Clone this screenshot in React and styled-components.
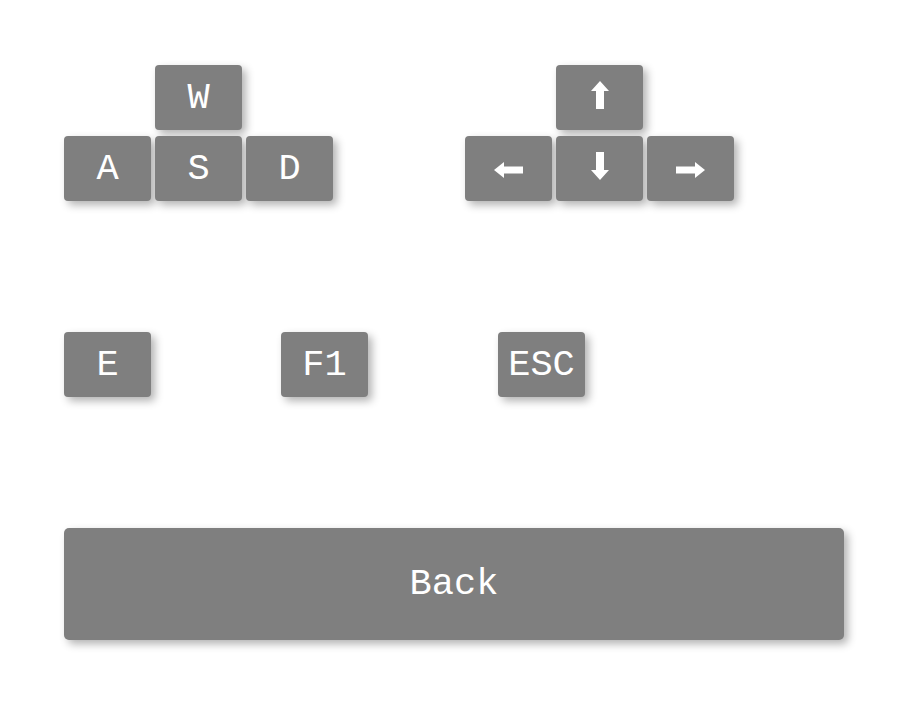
import styled, { createGlobalStyle } from "styled-components";

const GlobalStyle = createGlobalStyle`
  html, body {
    margin: 0;
    padding: 0;
    background: #ffffff;
  }
`;

const Page = styled.div`
  width: 910px;
  height: 705px;
  box-sizing: border-box;
  padding: 65px 0 0 64px;
  font-family: "Liberation Mono", "Cousine", monospace;
  display: flex;
  flex-direction: column;
`;

const ClusterRow = styled.div`
  display: flex;
  gap: 132px;
`;

const Cluster = styled.div`
  display: grid;
  grid-template-columns: repeat(3, 87px);
  grid-template-rows: 65px 65px;
  column-gap: 4px;
  row-gap: 6px;
`;

const KeyRow = styled.div`
  display: flex;
  gap: 130px;
  margin-top: 131px;
`;

const Key = styled.div`
  width: 87px;
  height: 65px;
  grid-column: ${(p) => p.col || "auto"};
  grid-row: ${(p) => p.row || "auto"};
  background: #7f7f7f;
  border-radius: 4px;
  box-shadow: 4px 4px 8px rgba(0, 0, 0, 0.3);
  color: #ffffff;
  font-size: 37px;
  display: flex;
  align-items: center;
  justify-content: center;
`;

const BackButton = styled.button`
  margin-top: 131px;
  width: 780px;
  height: 112px;
  border: 0;
  border-radius: 5px;
  background: #7f7f7f;
  box-shadow: 4px 4px 9px rgba(0, 0, 0, 0.3);
  color: #ffffff;
  font-family: "Liberation Mono", "Cousine", monospace;
  font-size: 37px;
  padding: 0;
`;

const ArrowSvg = styled.svg`
  display: block;
  margin-bottom: ${(p) => (p.$vertical ? "6px" : "-2px")};
`;

const paths = {
  up: "M9 0 L18 10 L13 10 L13 28 L5 28 L5 10 L0 10 Z",
  down: "M9 28 L18 18 L13 18 L13 0 L5 0 L5 18 L0 18 Z",
  right: "M29 8 L19 0 L19 4.5 L0 4.5 L0 11.5 L19 11.5 L19 16 Z",
  left: "M0 8 L10 0 L10 4.5 L29 4.5 L29 11.5 L10 11.5 L10 16 Z",
};

function Arrow({ dir }) {
  const vertical = dir === "up" || dir === "down";
  return (
    <ArrowSvg
      $vertical={vertical}
      width={vertical ? 18 : 29}
      height={vertical ? 28 : 16}
      viewBox={vertical ? "0 0 18 28" : "0 0 29 16"}
    >
      <path d={paths[dir]} fill="#fff" />
    </ArrowSvg>
  );
}

function App() {
  return (
    <>
      <GlobalStyle />
      <Page>
        <ClusterRow>
          <Cluster>
            <Key col="2" row="1">W</Key>
            <Key col="1" row="2">A</Key>
            <Key col="2" row="2">S</Key>
            <Key col="3" row="2">D</Key>
          </Cluster>
          <Cluster>
            <Key col="2" row="1"><Arrow dir="up" /></Key>
            <Key col="1" row="2"><Arrow dir="left" /></Key>
            <Key col="2" row="2"><Arrow dir="down" /></Key>
            <Key col="3" row="2"><Arrow dir="right" /></Key>
          </Cluster>
        </ClusterRow>
        <KeyRow>
          <Key>E</Key>
          <Key>F1</Key>
          <Key>ESC</Key>
        </KeyRow>
        <BackButton>Back</BackButton>
      </Page>
    </>
  );
}

export default App;
